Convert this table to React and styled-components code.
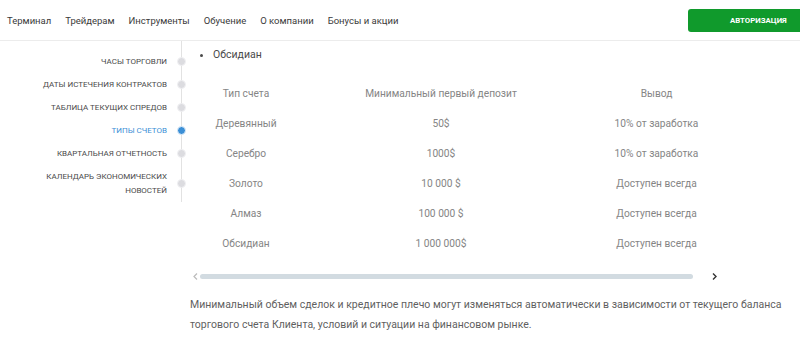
import React from "react";
import styled, { createGlobalStyle } from "styled-components";

const navItems = ["Терминал", "Трейдерам", "Инструменты", "Обучение", "О компании", "Бонусы и акции"];

const sections = [
  { label: "Часы торговли" },
  { label: "Даты истечения контрактов" },
  { label: "Таблица текущих спредов" },
  { label: "Типы счетов", active: true },
  { label: "Квартальная отчетность" },
  { label: ["Календарь экономических", "новостей"] },
];

const accounts = [
  ["Деревянный", "50$", "10% от заработка"],
  ["Серебро", "1000$", "10% от заработка"],
  ["Золото", "10 000 $", "Доступен всегда"],
  ["Алмаз", "100 000 $", "Доступен всегда"],
  ["Обсидиан", "1 000 000$", "Доступен всегда"],
];

const App = () => (
  <>
    <GlobalStyle />
    <Header>
      <Nav>
        {navItems.map((item) => (
          <NavLink key={item}>{item}</NavLink>
        ))}
      </Nav>
      <LoginButton>Авторизация</LoginButton>
    </Header>

    <Page>
      <Sidebar>
        {sections.map((s, i) => (
          <SideItem key={i}>
            <SideLabel active={s.active}>
              {Array.isArray(s.label)
                ? s.label.map((l) => <span key={l}>{l}</span>)
                : s.label}
            </SideLabel>
            <Dot active={s.active} />
          </SideItem>
        ))}
      </Sidebar>

      <Content>
        <BulletList>
          <li>Обсидиан</li>
        </BulletList>

        <Table>
          <Row>
            <Cell>Тип счета</Cell>
            <Cell>Минимальный первый депозит</Cell>
            <Cell>Вывод</Cell>
          </Row>
          {accounts.map((row) => (
            <Row key={row[0]}>
              {row.map((c) => (
                <Cell key={c}>{c}</Cell>
              ))}
            </Row>
          ))}
        </Table>

        <Scroller>
          <Arrow muted>
            <svg width="5" height="7" viewBox="0 0 5 7">
              <path d="M4 0.5 L1 3.5 L4 6.5" fill="none" stroke="currentColor" strokeWidth="1.2" />
            </svg>
          </Arrow>
          <Track />
          <Arrow>
            <svg width="5" height="7" viewBox="0 0 5 7">
              <path d="M1 0.5 L4 3.5 L1 6.5" fill="none" stroke="currentColor" strokeWidth="1.4" />
            </svg>
          </Arrow>
        </Scroller>

        <Note>
          Минимальный объем сделок и кредитное плечо могут изменяться автоматически в зависимости от
          текущего баланса торгового счета Клиента, условий и ситуации на финансовом рынке.
        </Note>
      </Content>
    </Page>
  </>
);

export default App;

const font = `Roboto, "Liberation Sans", Arial, sans-serif`;

const GlobalStyle = createGlobalStyle`
  html, body {
    margin: 0;
    padding: 0;
    background: #fff;
    overflow: hidden;
  }
  body {
    font-family: ${font};
    color: #444;
  }
`;

const Header = styled.header`
  display: flex;
  align-items: center;
  height: 40px;
  border-bottom: 1px solid #ececec;
  padding-left: 7px;
`;

const Nav = styled.nav`
  display: flex;
  gap: 14px;
`;

const NavLink = styled.a`
  font-family: ${font};
  font-size: 9.5px;
  color: #3a3a3a;
  cursor: pointer;
`;

const LoginButton = styled.button`
  margin-left: auto;
  height: 23px;
  width: 112px;
  border: none;
  border-radius: 3px 0 0 3px;
  background: #109a2c;
  color: #fff;
  font-family: ${font};
  font-weight: 700;
  font-size: 7.8px;
  text-transform: uppercase;
  text-align: left;
  padding: 0 0 0 42px;
`;

const Page = styled.div`
  display: flex;
  align-items: flex-start;
`;

const Sidebar = styled.aside`
  width: 181px;
  flex-shrink: 0;
  border-right: 1px solid #e2e2e2;
  padding-top: 9px;
`;

const SideItem = styled.div`
  position: relative;
  display: flex;
  justify-content: flex-end;
  align-items: center;
  padding: 4.5px 14px 4.5px 0;
`;

const SideLabel = styled.div`
  display: flex;
  flex-direction: column;
  align-items: flex-end;
  font-family: ${font};
  font-size: 8px;
  line-height: 14px;
  text-transform: uppercase;
  color: ${(p) => (p.active ? "#3b8fd6" : "#4a4a4a")};
  text-align: right;
`;

const Dot = styled.span`
  position: absolute;
  right: -5px;
  top: 50%;
  width: 7px;
  height: 7px;
  margin-top: -4.5px;
  border-radius: 50%;
  background: ${(p) => (p.active ? "#3b8fd6" : "#dcdce0")};
  border: 1px solid ${(p) => (p.active ? "#e6f0fa" : "#f1f1f3")};
`;

const Content = styled.main`
  margin-left: 8px;
  width: 602px;
`;

const BulletList = styled.ul`
  margin: 7px 0 0;
  padding-left: 23px;
  font-family: ${font};
  font-size: 10.5px;
  line-height: 14px;
  color: #4a4a4a;
`;

const Table = styled.div`
  margin-top: 16px;
  display: grid;
  grid-template-columns: 112px 278px 153px;
`;

const Row = styled.div`
  display: contents;
`;

const Cell = styled.div`
  height: 30px;
  display: flex;
  align-items: center;
  justify-content: center;
  font-family: ${font};
  font-size: 10.2px;
  color: #858585;
`;

const Scroller = styled.div`
  margin-top: 12px;
  display: flex;
  align-items: center;
  height: 12px;
  width: 530px;
`;

const Arrow = styled.span`
  display: flex;
  width: 10px;
  justify-content: center;
  color: ${(p) => (p.muted ? "#bcbcbc" : "#333")};
`;

const Track = styled.div`
  width: 493px;
  height: 5px;
  margin-right: 16px;
  border-radius: 3px;
  background: #d2dbe1;
`;

const Note = styled.p`
  margin: 13px 0 0;
  font-family: ${font};
  font-size: 10.5px;
  line-height: 20px;
  color: #5f5f5f;
`;
